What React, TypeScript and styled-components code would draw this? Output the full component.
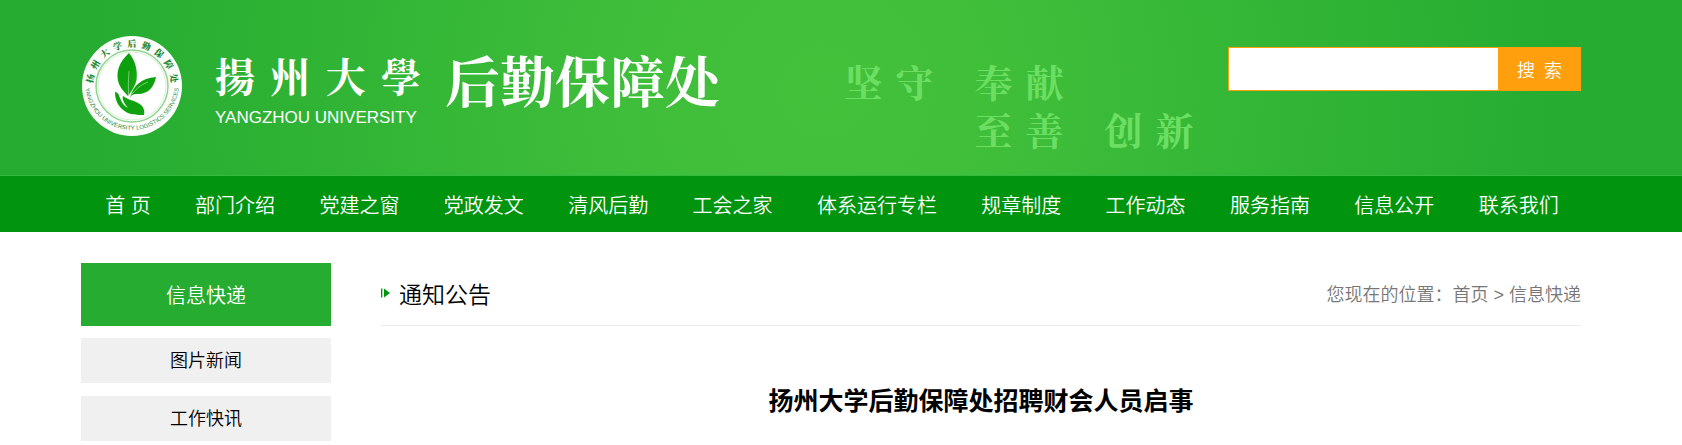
import React from "react";
import styled, { createGlobalStyle } from "styled-components";

const GlobalStyle = createGlobalStyle`
  * { box-sizing: border-box; }
  body {
    margin: 0;
    background: #fff;
    color: #000;
    font-family: "Liberation Sans", "Noto Sans CJK SC", sans-serif;
    font-size: 18px;
    font-weight: 350;
  }
  a { color: inherit; text-decoration: none; }
  h1, h2, p, ul { margin: 0; padding: 0; font-weight: inherit; }
  ul { list-style: none; }
`;

const Band = styled.div`
  padding-right: 20px;
`;

const Container = styled.div`
  max-width: 1500px;
  margin: 0 auto;
`;

const HeaderBand = styled(Band)`
  background: radial-gradient(circle 740px at 49% 90px, #44c13b 0%, #3fbe3a 25%, #25ac31 100%);
  border-bottom: 1px solid #34ba3c;
`;

const HeaderRow = styled(Container)`
  display: flex;
  align-items: flex-start;
  height: 175px;
`;

const Brand = styled.a`
  display: flex;
  padding-top: 35px;
  color: #fff;
`;

const Emblem = styled.svg`
  flex: none;
  width: 102px;
  height: 102px;
`;

const University = styled.div`
  width: 206px;
  margin: 8px 24px 0 32px;
`;

const UniversityName = styled.div`
  display: flex;
  justify-content: space-between;
  height: 64px;
  font-family: "Noto Serif CJK TC", "Noto Serif CJK SC", "Noto Sans CJK TC", serif;
  font-size: 40px;
  font-weight: 700;
  line-height: 64px;
`;

const UniversityLatin = styled.div`
  font-size: 17px;
  font-weight: 400;
  line-height: 22px;
  white-space: nowrap;
`;

const Department = styled.h1`
  padding-top: 8px;
  font-family: "Noto Serif CJK SC", "Noto Sans CJK SC", serif;
  font-size: 55px;
  font-weight: 700;
  line-height: 72px;
  white-space: nowrap;
`;

const Slogan = styled.div`
  display: grid;
  grid-template-columns: repeat(3, 102px);
  grid-auto-rows: 48px;
  column-gap: 28px;
  margin-left: auto;
  margin-right: 28px;
  padding-top: 57px;
  color: #6cdf62;
  font-family: "Noto Serif CJK SC", "Noto Sans CJK SC", serif;
  font-size: 38px;
  font-weight: 700;
  line-height: 48px;
`;

const Word = styled.div<{ $column: number; $row: number }>`
  display: flex;
  justify-content: space-around;
  grid-column: ${(p) => p.$column};
  grid-row: ${(p) => p.$row};
`;

const SearchForm = styled.form`
  display: flex;
  width: 353px;
  height: 44px;
  margin-top: 47px;
`;

const SearchInput = styled.input`
  flex: 1;
  min-width: 0;
  padding: 0 10px;
  border: 1px solid #ff9f0d;
  border-right: 0;
  border-radius: 0;
  background: #fff;
  font: inherit;
  outline: none;
`;

const SearchButton = styled.button`
  width: 83px;
  padding: 0;
  border: 0;
  background: #ff9f0d;
  color: #fff;
  font: inherit;
  cursor: pointer;
`;

const NavBand = styled(Band)`
  background: #00940f;
`;

const NavList = styled.ul`
  display: flex;
  justify-content: space-around;
  max-width: 1500px;
  margin: 0 auto;
  padding-left: 2px;
`;

const NavLink = styled.a`
  display: block;
  padding-top: 4px;
  color: #fff;
  font-size: 20px;
  line-height: 52px;
  white-space: nowrap;
`;

const Main = styled(Container)`
  display: flex;
  gap: 50px;
  padding-top: 31px;
`;

const Sidebar = styled.aside`
  flex: none;
  width: 250px;
`;

const SidebarTitle = styled.h2`
  margin-bottom: 12px;
  padding-top: 3px;
  background: #25ac31;
  color: #fff;
  font-size: 20px;
  line-height: 60px;
  text-align: center;
`;

const SidebarLink = styled.a`
  display: block;
  margin-bottom: 13px;
  padding-top: 2px;
  background: #f0f0f0;
  line-height: 43px;
  text-align: center;
`;

const Content = styled.main`
  flex: 1;
  min-width: 0;
`;

const ContentHead = styled.div`
  display: flex;
  align-items: center;
  justify-content: space-between;
  height: 63px;
  padding-bottom: 3px;
  border-bottom: 1px solid #ececec;
`;

const SectionTitle = styled.h2`
  display: flex;
  align-items: center;
  gap: 8px;
  font-size: 23px;
`;

const Breadcrumb = styled.nav`
  color: #777;
  white-space: nowrap;
`;

const ArticleTitle = styled.h1`
  padding-top: 55px;
  font-size: 25px;
  font-weight: 700;
  line-height: 40px;
  text-align: center;
`;

const navItems = [
  "首 页", "部门介绍", "党建之窗", "党政发文", "清风后勤", "工会之家",
  "体系运行专栏", "规章制度", "工作动态", "服务指南", "信息公开", "联系我们",
];

const sidebarItems = ["图片新闻", "工作快讯"];

const sloganWords = [
  { text: "坚守", column: 1, row: 1 },
  { text: "奉献", column: 2, row: 1 },
  { text: "至善", column: 2, row: 2 },
  { text: "创新", column: 3, row: 2 },
];

function Logo() {
  return (
    <Emblem viewBox="0 0 102 102" role="img" aria-label="扬州大学后勤保障处">
      <defs>
        <path id="ring-top" d="M12 54A39 39 0 0 1 51 12A39 39 0 0 1 90 54" />
        <path id="ring-bottom" d="M4 48A47 47 0 0 0 98 48" />
        <linearGradient id="leaf" x1="0" y1="0" x2="1" y2="1">
          <stop offset="0" stopColor="#0da30d" />
          <stop offset="0.500" stopColor="#0ca00c" />
          <stop offset="1" stopColor="#1fae18" />
        </linearGradient>
      </defs>
      <circle cx="51" cy="51" r="50" fill="#fff" />
      <circle cx="51" cy="51" r="36" fill="none" stroke="#8fd48d" strokeWidth="1.500" />
      <circle cx="51" cy="51" r="34" fill="none" stroke="#c9ebc8" strokeWidth="0.800" />
      <text fill="#16852a" fontFamily="'Noto Serif CJK SC','Noto Sans CJK SC',serif" fontSize="9" fontWeight="900" textAnchor="middle">
        <textPath href="#ring-top" startOffset="50%">扬&#8194;州&#8194;大&#8194;学&#8194;后&#8194;勤&#8194;保&#8194;障&#8194;处</textPath>
      </text>
      <text fill="#2b8a3a" fontFamily="'Liberation Sans',sans-serif" fontSize="6" fontWeight="400" textAnchor="middle">
        <textPath href="#ring-bottom" startOffset="50%">YANGZHOU UNIVERSITY LOGISTICS SERVICES</textPath>
      </text>
      <path d="M48 18C38 27 34 38 38 49C40 54 44 58 47 61C50 57 54 52 55.500 45C57 35 54 25 48 18Z" fill="url(#leaf)" />
      <path d="M49 63C52 51 60 43 75 42C73 53 66 60 55 59Q51 59 49 63Z" fill="url(#leaf)" />
      <path d="M47.500 61Q47 47 48 36M49 62Q56 51 67 47" fill="none" stroke="#a5dda2" strokeWidth="0.700" />
      <path d="M34 57C37 57 38 60 39 63C41 68 43 71 47 73C42 67 41 63 42 61C47 65 52 65 57 68C63 71 64 76 63 80C57 80 50 80 45 77C37 72 34 65 34 57Z" fill="#0fa10f" />
    </Emblem>
  );
}

function Bullet() {
  return (
    <svg width="10" height="10" viewBox="0 0 10 10" aria-hidden="true">
      <path d="M0 0.500h1v9H0z" fill="#00940f" />
      <path d="M1 0.500h1v9H1z" fill="#a8dcae" />
      <path d="M3 0.500L9 5L3 9.500Z" fill="#00940f" />
    </svg>
  );
}

export default function App() {
  return (
    <>
      <GlobalStyle />
      <header>
        <HeaderBand>
          <HeaderRow>
            <Brand href="#">
              <Logo />
              <University>
                <UniversityName>
                  <span>揚</span>
                  <span>州</span>
                  <span>大</span>
                  <span>學</span>
                </UniversityName>
                <UniversityLatin>YANGZHOU UNIVERSITY</UniversityLatin>
              </University>
              <Department>后勤保障处</Department>
            </Brand>
            <Slogan>
              {sloganWords.map((word) => (
                <Word key={word.text} $column={word.column} $row={word.row}>
                  {[...word.text].map((char) => (
                    <span key={char}>{char}</span>
                  ))}
                </Word>
              ))}
            </Slogan>
            <SearchForm onSubmit={(e) => e.preventDefault()}>
              <SearchInput type="text" aria-label="搜索" />
              <SearchButton type="submit">搜&#8194;索</SearchButton>
            </SearchForm>
          </HeaderRow>
        </HeaderBand>
        <NavBand as="nav">
          <NavList>
            {navItems.map((label) => (
              <li key={label}>
                <NavLink href="#">{label}</NavLink>
              </li>
            ))}
          </NavList>
        </NavBand>
      </header>
      <Band>
        <Main>
          <Sidebar>
            <SidebarTitle>信息快递</SidebarTitle>
            <ul>
              {sidebarItems.map((label) => (
                <li key={label}>
                  <SidebarLink href="#">{label}</SidebarLink>
                </li>
              ))}
            </ul>
          </Sidebar>
          <Content>
            <ContentHead>
              <SectionTitle>
                <Bullet />
                通知公告
              </SectionTitle>
              <Breadcrumb aria-label="您现在的位置">
                您现在的位置：<a href="#">首页</a> &gt; <a href="#">信息快递</a>
              </Breadcrumb>
            </ContentHead>
            <ArticleTitle>扬州大学后勤保障处招聘财会人员启事</ArticleTitle>
          </Content>
        </Main>
      </Band>
    </>
  );
}
